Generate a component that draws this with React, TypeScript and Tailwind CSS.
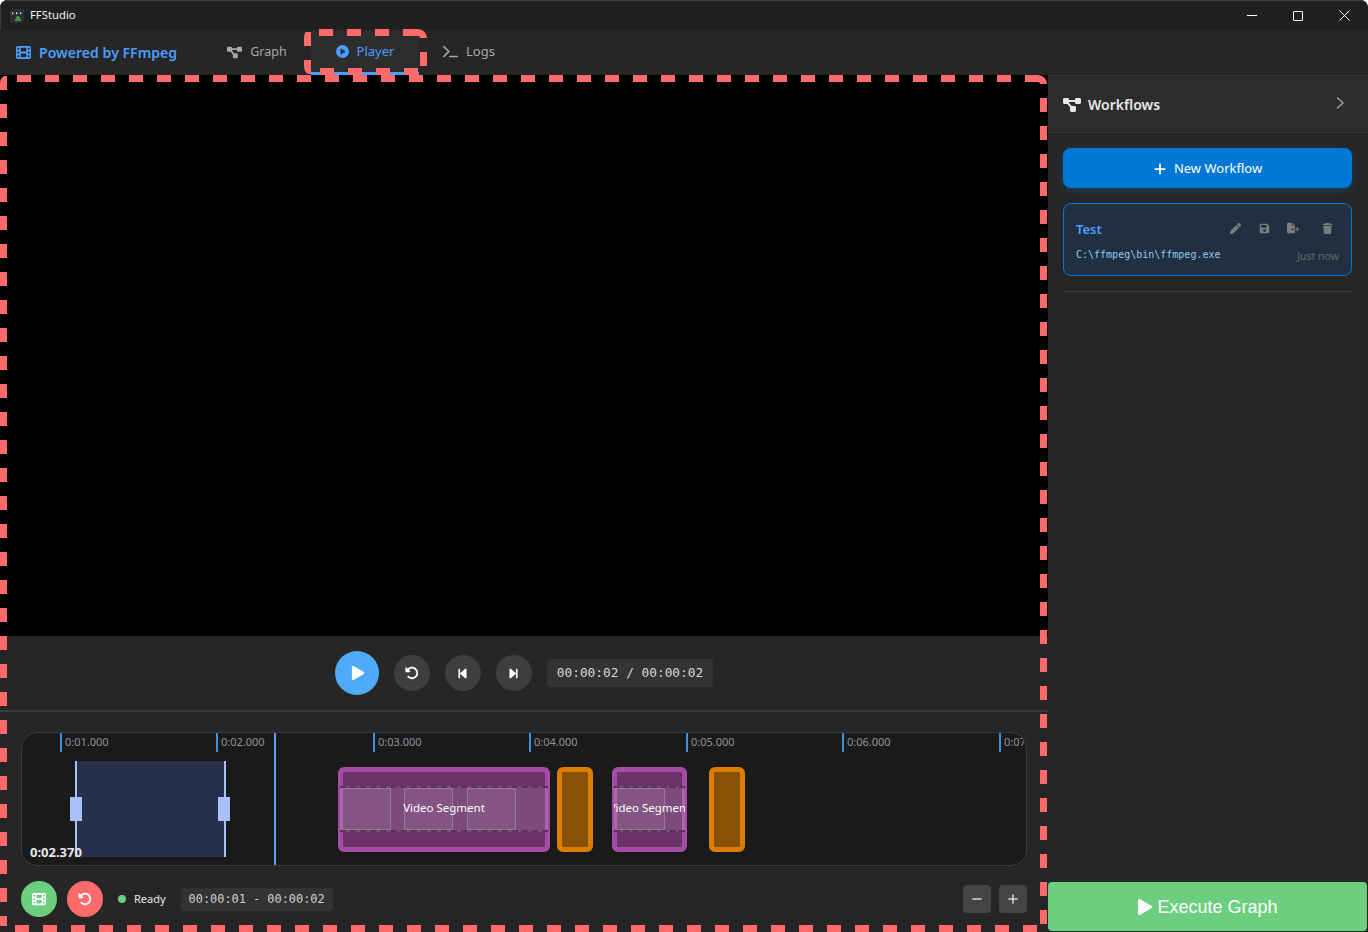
import React from 'react';
import { FaPlay } from 'react-icons/fa';
import {
  FaFilm, FaDiagramProject, FaCirclePlay, FaTerminal, FaPlus, FaPen, FaFloppyDisk, FaFileExport,
  FaTrash, FaRotateLeft, FaBackwardStep, FaForwardStep, FaMinus,
} from 'react-icons/fa6';

const ui = "font-['Noto_Sans',sans-serif]";
const mono = "font-['DejaVu_Sans_Mono',monospace]";

const ticks = [
  { x: 38, label: '0:01.000' },
  { x: 194, label: '0:02.000' },
  { x: 351, label: '0:03.000' },
  { x: 507, label: '0:04.000' },
  { x: 664, label: '0:05.000' },
  { x: 820, label: '0:06.000' },
  { x: 977, label: '0:07.000' },
];

const Logo = () => (
  <svg width="14" height="14" viewBox="0 0 14 14" className="shrink-0">
    <rect width="14" height="14" rx="2" fill="#2b3036" />
    <path d="M2 3l2 1.2L2 5.4zM6 3l2 1.2L6 5.4zM10 3l2 1.2-2 1.2z" fill="#d8dde0" />
    <path d="M5 12V10h1V8h1V7h2v1h1v2h1v2z" fill="#3f9a3f" />
  </svg>
);

// dashed highlight frame, each side keeps its own dash phase
const DashFrame = ({ w, h, sides, corner, className }: { w: number; h: number; sides: string[]; corner: string; className: string }) => (
  <svg
    width={w}
    height={h}
    viewBox={`0 0 ${w} ${h}`}
    fill="none"
    stroke="#ff6b6b"
    strokeWidth="7"
    className={`absolute rounded-lg ${className}`}
  >
    {sides.map((d) => (
      <path key={d} d={d} strokeDasharray="14 14" />
    ))}
    <path d={corner} />
  </svg>
);

const Segment = ({ x, w, thumbs }: { x: number; w: number; thumbs: number[] }) => (
  <div
    className="absolute top-[34px] h-[85px] rounded-[6px] border-[5px] border-[#a64ca6] bg-[#6b3369]"
    style={{ left: x, width: w }}
  >
    <div className="absolute inset-x-[-3px] top-[14px] flex h-[46px] items-center justify-center overflow-hidden border-y-2 border-dashed border-[#5a3358] bg-white/[0.12] pb-[2px]">
      {thumbs.map((t) => (
        <div
          key={t}
          className="absolute top-0 h-[42px] w-[49px] border border-[#98789a] bg-white/[0.05]"
          style={{ left: t }}
        />
      ))}
      <span className={`${ui} relative shrink-0 whitespace-nowrap text-[11.5px] text-white`}>Video Segment</span>
    </div>
  </div>
);

const Transition = ({ x }: { x: number }) => (
  <div
    className="absolute top-[34px] h-[85px] w-[36px] rounded-[6px] border-[5px] border-[#db7c00] bg-[#875208]"
    style={{ left: x }}
  />
);

const RoundButton = ({ children }: { children: React.ReactNode }) => (
  <button className="flex h-9 w-9 items-center justify-center rounded-full bg-[#3e3e3e] text-[14px] text-white">
    {children}
  </button>
);

export default function App() {
  return (
    <div className={`${ui} flex h-[932px] w-[1368px] flex-col overflow-hidden rounded-t-lg bg-[#262626] text-white`}>
      {/* title bar */}
      <div className="flex h-[30px] shrink-0 items-center border-l border-t border-[#3c3c3c] bg-[#202020] pl-[9px] pr-px">
        <Logo />
        <span className="ml-[6px] text-[11.3px] text-[#f0f0f0]">FFStudio</span>
        <div className="ml-auto flex items-center">
          <div className="flex h-[30px] w-[46px] items-center justify-center">
            <div className="h-px w-[10px] bg-white" />
          </div>
          <div className="flex h-[30px] w-[46px] items-center justify-center">
            <div className="h-[10px] w-[10px] rounded-[1px] border border-white" />
          </div>
          <div className="flex h-[30px] w-[46px] items-center justify-center">
            <svg width="11" height="11" viewBox="0 0 11 11" stroke="#fff" fill="none">
              <path d="M.5.5l10 10M10.5.5l-10 10" />
            </svg>
          </div>
        </div>
      </div>

      {/* nav */}
      <div className="flex h-[45px] shrink-0 items-center bg-[#262626]">
        <div className="flex w-[196px] items-center pl-4 pt-px text-[#4a9eff]">
          <FaFilm size={15} />
          <span className="ml-2 text-[14.1px] font-semibold">Powered by FFmpeg</span>
        </div>
        <div className="flex h-full items-center gap-[8px] text-[#a8a8a8]">
          <div className="flex h-full w-[107px] items-center justify-center gap-2 pb-px pl-[15px] text-[12.5px]">
            <FaDiagramProject size={15} className="text-[#a8a8a8]" />
            <span>Graph</span>
          </div>
          <div className="relative flex h-full w-[108px] items-center justify-center gap-2 border-b-[3px] border-[#4a9eff] bg-[#2d2d2d] pt-px text-[13px] text-[#4a9eff]">
            <FaCirclePlay size={13} />
            <span>Player</span>
            <DashFrame
              w={123}
              h={46}
              className="left-[-7px] top-[-1px]"
              sides={['M15 3.5H85', 'M119.5 23V37', 'M16 42.5H114', 'M3.5 3V45']}
              corner="M99 3.5H114A5.5 5.5 0 0 1 119.5 9"
            />
          </div>
          <div className="flex h-full items-center gap-2 pb-[2px] pl-4 text-[13px]">
            <FaTerminal size={15} />
            <span>Logs</span>
          </div>
        </div>
      </div>

      <div className="flex min-h-0 flex-1">
        {/* player panel */}
        <div className="relative flex w-[1048px] shrink-0 flex-col bg-[#262626]">
          <div className="h-[561px] shrink-0 bg-black" />

          <div className="flex h-[76px] shrink-0 items-center justify-center gap-[15px] border-b-2 border-[#3a3a3a]">
            <button className="flex h-11 w-11 items-center justify-center rounded-full bg-[#4dabf7] text-white">
              <FaPlay size={14} className="ml-0.5" />
            </button>
            <RoundButton><FaRotateLeft /></RoundButton>
            <RoundButton><FaBackwardStep size={13} /></RoundButton>
            <RoundButton><FaForwardStep size={13} /></RoundButton>
            <div className={`${mono} rounded bg-[#333333] px-[10px] py-[4px] text-[12.8px] text-[#d8d8d8]`}>
              00:00:02 / 00:00:02
            </div>
          </div>

          {/* timeline */}
          <div className="relative mx-[21px] mt-[20px] h-[134px] shrink-0 overflow-hidden rounded-2xl border border-[#3a3a3a] bg-[#1a1a1a]">
            {ticks.map((t) => (
              <div
                key={t.label}
                className="absolute top-0 flex h-[19px] items-center whitespace-nowrap border-l-2 border-[#3d8fd6] pl-[3px] text-[11px] text-[#8d939c]"
                style={{ left: t.x }}
              >
                {t.label}
              </div>
            ))}

            <div className="absolute left-[53px] top-[28px] h-[96px] w-[151px] border-x-2 border-[#a9c1fb] bg-[#26304d]" />
            <div className="absolute left-[48px] top-[64px] h-6 w-3 bg-[#a9c1fb]" />
            <div className="absolute left-[196px] top-[64px] h-6 w-3 bg-[#a9c1fb]" />
            <div className="absolute left-[252px] top-0 h-full w-[2px] bg-[#5c9def]" />
            <span className="absolute left-[8px] top-[110px] text-[13px] font-bold text-[#e8e8e8]">0:02.370</span>

            <Segment x={316} w={212} thumbs={[2, 64, 127]} />
            <Transition x={535} />
            <Segment x={590} w={75} thumbs={[2]} />
            <Transition x={687} />
          </div>

          {/* footer */}
          <div className="flex flex-1 items-center px-[21px]">
            <button className="flex h-9 w-9 items-center justify-center rounded-full bg-[#6bcf7f] text-white">
              <FaFilm size={14} />
            </button>
            <button className="ml-[10px] flex h-9 w-9 items-center justify-center rounded-full bg-[#ff6b6b] text-white">
              <FaRotateLeft size={14} />
            </button>
            <div className="ml-[15px] h-2 w-2 rounded-full bg-[#6bcf7f]" />
            <span className="ml-2 mt-px text-[11px] text-[#e6e6e6]">Ready</span>
            <div className={`${mono} ml-[15px] mt-px rounded bg-[#333333] px-2 py-[3px] text-[11.9px] text-[#d0d0d0]`}>
              00:00:01 - 00:00:02
            </div>
            <div className="ml-auto flex gap-2">
              <button className="flex h-7 w-7 items-center justify-center rounded bg-[#444444] text-[#d8d8d8]">
                <FaMinus size={12} />
              </button>
              <button className="flex h-7 w-7 items-center justify-center rounded bg-[#444444] text-[#d8d8d8]">
                <FaPlus size={12} />
              </button>
            </div>
          </div>

          <DashFrame
            w={1048}
            h={857}
            className="left-0 top-0"
            sides={['M17 3.5H1011', 'M1043.5 23V849', 'M15 853.5H1037', 'M3.5 1V851']}
            corner="M1025 3.5H1038A5.5 5.5 0 0 1 1043.5 9"
          />
        </div>

        {/* workflows sidebar */}
        <div className="flex w-[320px] flex-col bg-[#262626]">
          <div className="flex h-[58px] shrink-0 items-center justify-between border-y border-[#383838] bg-[#2d2d2d] pl-[15px] pr-[23px]">
            <div className="flex items-center gap-[7px] pt-[2px]">
              <FaDiagramProject size={18} className="text-[#e8e8e8]" />
              <span className="text-sm font-semibold text-[#e8e8e8]">Workflows</span>
            </div>
            <svg width="10" height="14" viewBox="0 0 10 14" fill="none" stroke="#9a9a9a" strokeWidth="1.6" className="mb-[2px]">
              <path d="M2 1.5L8 7l-6 5.5" />
            </svg>
          </div>

          <div className="flex-1 px-[15px] pt-[15px]">
            <button className="flex h-10 w-[289px] items-center justify-center gap-[7px] rounded-lg bg-[#0078d4] pt-[2px] text-[13px] text-white shadow-[0_2px_8px_rgba(0,120,212,0.3)]">
              <FaPlus size={14} />
              <span>New Workflow</span>
            </button>

            <div className="mt-[15px] h-[73px] w-[289px] rounded-lg border border-[#0078d4] bg-[#203040] px-3 pt-[14px]">
              <div className="flex items-center justify-between">
                <span className="text-[13px] font-semibold leading-[22px] text-[#4a9eff]">Test</span>
                <div className="mb-[2px] flex items-center text-[#7c7c7c]">
                  <FaPen size={11} />
                  <FaFloppyDisk size={11} className="ml-[18px]" />
                  <FaFileExport size={12} className="ml-[17px]" />
                  <FaTrash size={11} className="ml-[23px] mr-[6px]" />
                </div>
              </div>
              <div className="mt-[5px] flex items-center justify-between">
                <span className={`${mono} text-[10px] text-[#8ec8f0]`}>C:\ffmpeg\bin\ffmpeg.exe</span>
                <span className="mt-[4px] text-[10.5px] text-[#666666]">Just now</span>
              </div>
            </div>

            <div className="mt-[15px] h-px w-[289px] bg-[#3a3a3a]" />
          </div>

          <button className="mb-[1px] mr-[1px] flex h-[49px] shrink-0 items-center justify-center gap-[4px] rounded bg-[#6bcf7f] font-['Liberation_Sans',sans-serif] text-lg text-white">
            <FaPlay size={16} />
            <span>Execute Graph</span>
          </button>
        </div>
      </div>
    </div>
  );
}
